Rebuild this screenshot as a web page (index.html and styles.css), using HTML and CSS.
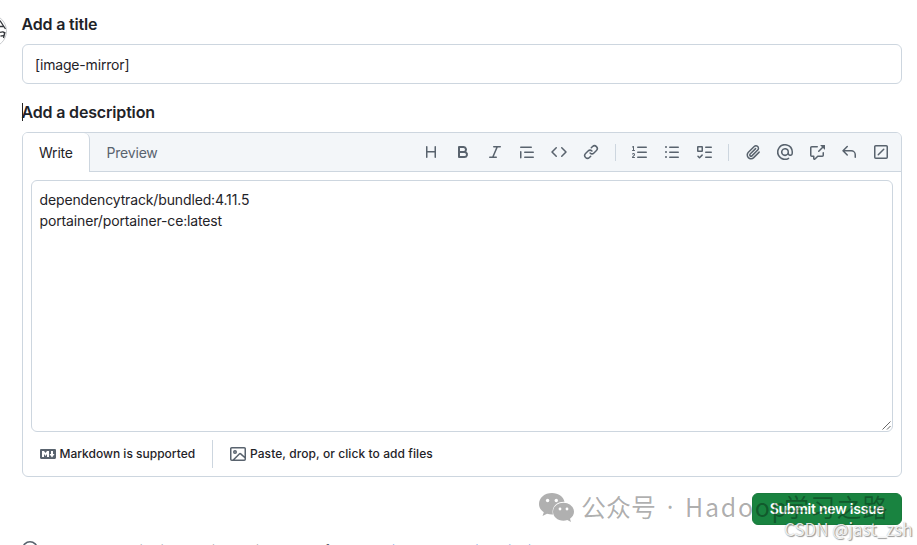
FILE: index.html
```html
<!DOCTYPE html>
<html lang="en">
<head>
<meta charset="utf-8">
<title>New issue</title>
<link rel="stylesheet" href="styles.css">
</head>
<body>
<svg class="avatar" viewBox="0 0 8 36"><circle cx="-10" cy="18" r="16.5" fill="#fff" stroke="#c9cbce"/><path d="M0 7.500l5.500 8.500M0 13.500h3.500M0 19.500q4-1.500 4.500 1t-4 2.500M5 19l-1.500 6" fill="none" stroke="#35383d" stroke-width="1.300"/></svg>
<main class="form">
  <h2 class="label">Add a title</h2>
  <div class="title-input">[image-mirror]</div>
  <h2 class="label desc">Add a description</h2>
  <section class="editor">
    <header class="head">
      <div class="tab active">Write</div>
      <div class="tab">Preview</div>
      <div class="tools">
        <svg viewBox="0 0 16 16"><path d="M3.750 2a.75.75 0 0 1 .75.75V7h7V2.750a.75.75 0 0 1 1.500 0v10.500a.75.75 0 0 1-1.500 0V8.500h-7v4.750a.75.75 0 0 1-1.500 0V2.750A.75.75 0 0 1 3.750 2Z"/></svg>
        <svg viewBox="0 0 16 16"><path d="M4 2h4.500a3.501 3.501 0 0 1 2.852 5.530A3.499 3.499 0 0 1 9.500 14H4a1 1 0 0 1-1-1V3a1 1 0 0 1 1-1Zm1 7v3h4.500a1.500 1.500 0 0 0 0-3Zm3.500-2a1.500 1.500 0 0 0 0-3H5v3Z"/></svg>
        <svg viewBox="0 0 16 16"><path d="M6 2.750A.75.75 0 0 1 6.750 2h6.500a.75.75 0 0 1 0 1.500h-2.505l-3.858 9H9.250a.75.75 0 0 1 0 1.500h-6.500a.75.75 0 0 1 0-1.500h2.505l3.858-9H6.750A.75.75 0 0 1 6 2.750Z"/></svg>
        <svg viewBox="0 0 16 16"><path d="M1.750 2.500h10.500a.75.75 0 0 1 0 1.500H1.750a.75.75 0 0 1 0-1.500Zm4 5h8.500a.75.75 0 0 1 0 1.500h-8.500a.75.75 0 0 1 0-1.500Zm0 5h8.500a.75.75 0 0 1 0 1.500h-8.500a.75.75 0 0 1 0-1.500ZM2.500 7.750v6a.75.75 0 0 1-1.500 0v-6a.75.75 0 0 1 1.500 0Z"/></svg>
        <svg viewBox="0 0 16 16"><path d="m11.280 3.220 4.250 4.250a.75.75 0 0 1 0 1.060l-4.250 4.250a.75.75 0 0 1-1.060-1.060L13.940 8l-3.720-3.720a.75.75 0 0 1 1.060-1.060Zm-6.560 0a.75.75 0 0 1 1.060 1.060L2.060 8l3.720 3.720a.75.75 0 0 1-1.060 1.060L.47 8.530a.75.75 0 0 1 0-1.060Z"/></svg>
        <svg viewBox="0 0 16 16"><path d="m7.775 3.275 1.250-1.250a3.500 3.500 0 1 1 4.950 4.950l-2.500 2.500a3.500 3.500 0 0 1-4.950 0 .75.75 0 0 1 1.060-1.060 2 2 0 0 0 2.830 0l2.500-2.500a2.002 2.002 0 0 0-2.830-2.830l-1.250 1.250a.75.75 0 0 1-1.060-1.060Zm-4.690 9.640a2.002 2.002 0 0 0 2.830 0l1.250-1.250a.75.75 0 0 1 1.060 1.060l-1.250 1.250a3.500 3.500 0 1 1-4.950-4.950l2.500-2.500a3.500 3.500 0 0 1 4.950 0 .75.75 0 0 1-1.060 1.060 2 2 0 0 0-2.830 0l-2.500 2.500a2.002 2.002 0 0 0 0 2.830Z"/></svg>
        <i></i>
        <svg viewBox="0 0 16 16"><path d="M5 3.250a.75.75 0 0 1 .75-.75h8.500a.75.75 0 0 1 0 1.500h-8.500A.75.75 0 0 1 5 3.250Zm0 5a.75.75 0 0 1 .75-.75h8.500a.75.75 0 0 1 0 1.500h-8.500A.75.75 0 0 1 5 8.250Zm0 5a.75.75 0 0 1 .75-.75h8.500a.75.75 0 0 1 0 1.500h-8.500a.75.75 0 0 1-.75-.75ZM.924 10.320a.5.5 0 0 1-.851-.525l.001-.001.001-.002.002-.004.007-.011c.097-.144.215-.273.348-.384.228-.19.588-.392 1.068-.392.468 0 .858.181 1.126.484.259.294.377.673.377 1.038 0 .987-.686 1.495-1.156 1.845l-.047.035c-.303.225-.522.400-.654.597h1.357a.5.5 0 0 1 0 1H.5a.5.5 0 0 1-.5-.5c0-1.005.692-1.520 1.167-1.875l.035-.025c.531-.396.800-.625.800-1.078a.57.57 0 0 0-.128-.376C1.806 10.068 1.695 10 1.500 10a.658.658 0 0 0-.429.163.835.835 0 0 0-.144.153ZM2.003 2.500V6h.503a.5.5 0 0 1 0 1H.5a.5.5 0 0 1 0-1h.503V3.308l-.280.140a.5.500 0 0 1-.446-.895l1.003-.500a.5.500 0 0 1 .723.447Z"/></svg>
        <svg viewBox="0 0 16 16"><path d="M5.750 2.500h8.500a.75.75 0 0 1 0 1.500h-8.500a.75.75 0 0 1 0-1.500Zm0 5h8.500a.75.75 0 0 1 0 1.500h-8.500a.75.75 0 0 1 0-1.500Zm0 5h8.500a.75.75 0 0 1 0 1.500h-8.500a.75.75 0 0 1 0-1.500ZM2 14a1 1 0 1 1 0-2 1 1 0 0 1 0 2Zm1-6a1 1 0 1 1-2 0 1 1 0 0 1 2 0ZM2 4a1 1 0 1 1 0-2 1 1 0 0 1 0 2Z"/></svg>
        <svg viewBox="0 0 16 16"><path d="M2 2h4a1 1 0 0 1 1 1v4a1 1 0 0 1-1 1H2a1 1 0 0 1-1-1V3a1 1 0 0 1 1-1Zm4.655 8.595a.75.75 0 0 1 0 1.060L4.030 14.280a.75.75 0 0 1-1.060 0l-1.500-1.500a.749.749 0 0 1 1.060-1.060l.97.970 2.095-2.095a.75.75 0 0 1 1.060 0ZM9.750 2.500h5.500a.75.75 0 0 1 0 1.500h-5.500a.75.75 0 0 1 0-1.500Zm0 5h5.500a.75.75 0 0 1 0 1.500h-5.500a.75.75 0 0 1 0-1.500Zm0 5h5.500a.75.75 0 0 1 0 1.500h-5.500a.75.75 0 0 1 0-1.500Zm-7.250-9v3h3v-3Z"/></svg>
        <i></i>
        <svg viewBox="0 0 16 16"><path d="M12.212 3.020a1.753 1.753 0 0 0-2.478.003l-5.830 5.830a3.007 3.007 0 0 0-.880 2.127c0 .795.315 1.551.880 2.116.567.567 1.333.890 2.126.890.790 0 1.548-.321 2.116-.890l5.480-5.480a.75.75 0 0 1 1.061 1.060l-5.480 5.480a4.492 4.492 0 0 1-3.177 1.330c-1.200 0-2.345-.487-3.187-1.330a4.483 4.483 0 0 1-1.320-3.177c0-1.195.475-2.341 1.320-3.186l5.830-5.830a3.250 3.250 0 0 1 5.553 2.297c0 .863-.343 1.691-.953 2.301L7.439 12.390c-.375.377-.884.590-1.416.593a1.998 1.998 0 0 1-1.412-.593 1.992 1.992 0 0 1 0-2.828l5.480-5.480a.751.751 0 0 1 1.060 1.060l-5.480 5.480a.492.492 0 0 0 0 .707.499.499 0 0 0 .352.154.510.510 0 0 0 .356-.154l5.833-5.827a1.755 1.755 0 0 0 0-2.481Z"/></svg>
        <svg viewBox="0 0 16 16"><path d="M4.750 2.370a6.501 6.501 0 0 0 6.500 11.260.75.75 0 0 1 .75 1.298A7.999 7.999 0 0 1 .989 4.148 8 8 0 0 1 16 7.750v1.500a2.750 2.750 0 0 1-5.072 1.475 3.999 3.999 0 0 1-6.650-4.190A4 4 0 0 1 12 8v1.250a1.250 1.250 0 0 0 2.500 0V7.867a6.500 6.500 0 0 0-9.750-5.496ZM10.500 8a2.500 2.500 0 1 0-5 0 2.500 2.500 0 0 0 5 0Z"/></svg>
        <svg viewBox="0 0 16 16"><path d="M2.750 3.500a.25.25 0 0 0-.25.25v7.500c0 .138.112.250.250.250h2a.75.75 0 0 1 .75.75v2.190l2.720-2.720a.749.749 0 0 1 .53-.220h4.500a.25.25 0 0 0 .25-.25v-2.500a.75.75 0 0 1 1.500 0v2.500A1.750 1.750 0 0 1 13.250 13H9.060l-2.573 2.573A1.458 1.458 0 0 1 4 14.543V13H2.750A1.750 1.750 0 0 1 1 11.250v-7.500C1 2.784 1.784 2 2.750 2h5.500a.75.75 0 0 1 0 1.500ZM16 1.250v4.146a.25.25 0 0 1-.427.177L14.030 4.030l-3.750 3.750a.749.749 0 0 1-1.060-1.060l3.750-3.750-1.543-1.543A.25.25 0 0 1 11.604 1h4.146a.25.25 0 0 1 .25.25Z"/></svg>
        <svg viewBox="0 0 16 16"><path d="M6.780 1.970a.75.75 0 0 1 0 1.060L3.810 6h6.440A4.750 4.750 0 0 1 15 10.750v2.500a.75.75 0 0 1-1.500 0v-2.500a3.250 3.250 0 0 0-3.250-3.250H3.810l2.970 2.970a.75.75 0 0 1-1.060 1.060L1.470 7.280a.75.75 0 0 1 0-1.060l4.250-4.250a.75.75 0 0 1 1.060 0Z"/></svg>
        <svg viewBox="0 0 16 16"><path d="M2.750 1h10.500C14.216 1 15 1.784 15 2.750v10.500A1.750 1.750 0 0 1 13.250 15H2.750A1.750 1.750 0 0 1 1 13.250V2.750C1 1.784 1.784 1 2.750 1Zm0 1.500a.25.25 0 0 0-.25.25v10.500c0 .138.112.250.250.250h10.500a.25.25 0 0 0 .25-.25V2.750a.25.25 0 0 0-.25-.25Zm8.530 3.280-5.500 5.500a.75.75 0 0 1-1.060-1.060l5.500-5.500a.75.75 0 0 1 1.060 1.060Z"/></svg>
      </div>
    </header>
    <div class="textarea">dependencytrack/bundled:4.11.5<br>portainer/portainer-ce:latest
      <svg class="grip" viewBox="0 0 9 9"><path d="M.5 8.500l8-8M5 8.500L8.500 5" fill="none" stroke="#666" stroke-width="1"/></svg>
    </div>
    <footer class="foot">
      <div class="md"><svg viewBox="0 0 16 16"><path d="M14.850 3c.630 0 1.150.520 1.140 1.150v7.700c0 .630-.510 1.150-1.150 1.150H1.150C.52 13 0 12.480 0 11.840V4.150C0 3.520.52 3 1.150 3ZM9 11V5H7L5.500 7 4 5H2v6h2V8l1.500 1.920L7 8v3Zm2.990.500L14.500 8H13V5h-2v3H9.500Z"/></svg><span>Markdown is supported</span></div>
      <div class="files"><svg viewBox="0 0 16 16"><path d="M16 13.250A1.750 1.750 0 0 1 14.250 15H1.750A1.750 1.750 0 0 1 0 13.250V2.750C0 1.784.784 1 1.750 1h12.500c.966 0 1.750.784 1.750 1.750ZM1.750 2.500a.25.25 0 0 0-.25.25v10.500c0 .138.112.250.250.250h.940l.030-.030 6.077-6.078a1.750 1.750 0 0 1 2.412-.060L14.500 10.310V2.750a.25.25 0 0 0-.25-.25Zm12.500 11a.25.25 0 0 0 .25-.25v-.917l-4.298-3.889a.25.25 0 0 0-.344.009L4.810 13.500ZM7 6a2 2 0 1 1-3.999.001A2 2 0 0 1 7 6ZM5.500 6a.5.500 0 1 0-1 0 .5.500 0 0 0 1 0Z"/></svg><span>Paste, drop, or click to add files</span></div>
    </footer>
  </section>
  <div class="actions"><button class="submit">Submit new issue</button></div>
  <p class="note"><svg viewBox="0 0 16 16"><circle cx="8" cy="8" r="7.250" fill="none" stroke="#59636e" stroke-width="1.500"/><path d="M7 7h1.700v5H7zM7 4h2v2H7z"/></svg><span>Remember, contributions to this repository should follow our <a>GitHub Community Guidelines</a>.</span></p>
</main>
<div class="watermark">
  <svg viewBox="0 0 36 30"><path fill="#b0b0b0" d="M13 0C5.500 0 0 4.900 0 11c0 3.500 1.900 6.300 4.800 8.300L3.500 23l4.500-2.300c1.700.5 3.200.8 5 .8h1C12 14.500 17.500 8.500 25.500 8.800 24.500 3.600 19.500 0 13 0z"/><path fill="#b0b0b0" d="M24.500 9.800c-6 0-10.500 4-10.500 8.900s4.500 9 10.500 9c1.300 0 2.600-.3 3.800-.7l3.700 2-1-3.300c2.400-1.700 4-4.200 4-7 0-4.900-4.800-8.900-10.500-8.900z"/><g fill="#fff"><circle cx="8.600" cy="7.500" r="1.700"/><circle cx="17.300" cy="7.500" r="1.700"/><circle cx="21" cy="16" r="1.400"/><circle cx="28" cy="16" r="1.400"/></g></svg>
  <span class="cn">公众号</span><span class="dot">·</span><span class="had">Hadoop</span><span class="cn2">学习之路</span>
</div>
<div class="credit">CSDN @jast_zsh</div>
</body>
</html>
```

FILE: styles.css
```css
* { box-sizing: border-box; }
body { margin: 0; width: 917px; height: 545px; overflow: hidden; position: relative; background: #fff; color: #1f2328; font: 14px/21px Inter, "Noto Sans", sans-serif; }
svg { fill: #59636e; flex: none; }
.avatar { position: absolute; left: 0; top: 13px; width: 8px; height: 36px; }
.form { padding: 12px 15px 0 22px; }
.label { margin: 0; font-size: 16px; line-height: 24px; font-weight: 600; letter-spacing: -.17px; width: max-content; text-indent: -.5px; }
.desc { margin-top: 16px; position: relative; }
.desc::before { content: ""; position: absolute; left: 0; top: 3px; width: 1px; height: 18px; background: #222; }
.title-input { height: 40px; margin-top: 8px; border: 1px solid #cdd6df; border-radius: 6px; padding: 10px 12px; line-height: 20px; letter-spacing: -.17px; }
.editor { margin-top: 8px; height: 345px; border: 1px solid #cdd6df; border-radius: 6px; }
.head { height: 39px; display: flex; background: #f3f6f9; border-radius: 5px 5px 0 0; box-shadow: inset 0 -1px #cdd6df; }
.tab { padding: 10px 16px; line-height: 20px; color: #59636e; letter-spacing: -.2px; }
.tab.active { width: 67px; background: #fff; color: #1f2328; border-right: 1px solid #cdd6df; border-radius: 5px 6px 0 0; }
.tab:not(.active) { padding-left: 16.500px; }
.tools { margin-left: auto; padding: 0 12px 1px 0; display: flex; align-items: center; gap: 16px; }
.tools svg { width: 16px; height: 16px; }
.tools i { width: 1px; height: 17px; background: #cdd6df; margin: 0; }
.textarea { position: relative; margin: 8px 8px 0; height: 252px; border: 1px solid #cdd6df; border-radius: 6px; padding: 8px 7.500px; letter-spacing: -.14px; }
.grip { position: absolute; right: 1px; bottom: 1px; width: 9px; height: 9px; }
.foot { display: flex; align-items: center; height: 28px; margin-top: 8px; padding-left: 17px; font-size: 12px; font-weight: 500; line-height: 18px; }
.foot svg { width: 16px; height: 16px; }
.md, .files { display: flex; align-items: center; gap: 4px; height: 28px; }
.md { width: 173px; border-right: 1px solid #cdd6df; }
.md span { margin-left: -.5px; }
.files { padding-left: 17px; letter-spacing: .08px; }
.actions { display: flex; justify-content: flex-end; margin-top: 16px; }
.submit { width: 150px; height: 32px; padding: 0; border: 1px solid #197b3c; border-radius: 6px; background: #198340; color: #fff; font: 600 14px/20px Inter, sans-serif; letter-spacing: -.27px; }
.note { display: flex; gap: 6px; margin: 16px 0 0; font-size: 12px; line-height: 18px; letter-spacing: -.1px; color: #59636e; white-space: nowrap; }
.note svg { width: 16px; height: 16px; }
.note a { color: #0969da; }
.watermark { position: absolute; left: 539px; top: 493px; display: flex; align-items: flex-start; height: 32px; font: 25px/30px "Noto Sans CJK SC", sans-serif; color: rgba(0,0,0,.32); white-space: nowrap; }
.watermark svg { width: 36px; height: 30px; }
.watermark span { margin-top: -2px; }
.cn { margin-left: 6px; }
.dot { width: 28px; text-align: center; font-family: "Noto Sans", sans-serif; }
.had { width: 102px; margin-left: 1px; letter-spacing: 1.700px; }
.cn2 { margin-left: -3px; letter-spacing: 1.200px; }
.credit { position: absolute; left: 784px; top: 518px; font: 17px/22px "Noto Sans CJK SC", sans-serif; color: rgba(255,255,255,.85); text-shadow: 1px 1px 1px rgba(0,0,0,.4), 0 0 1px rgba(0,0,0,.3); white-space: nowrap; }
```
